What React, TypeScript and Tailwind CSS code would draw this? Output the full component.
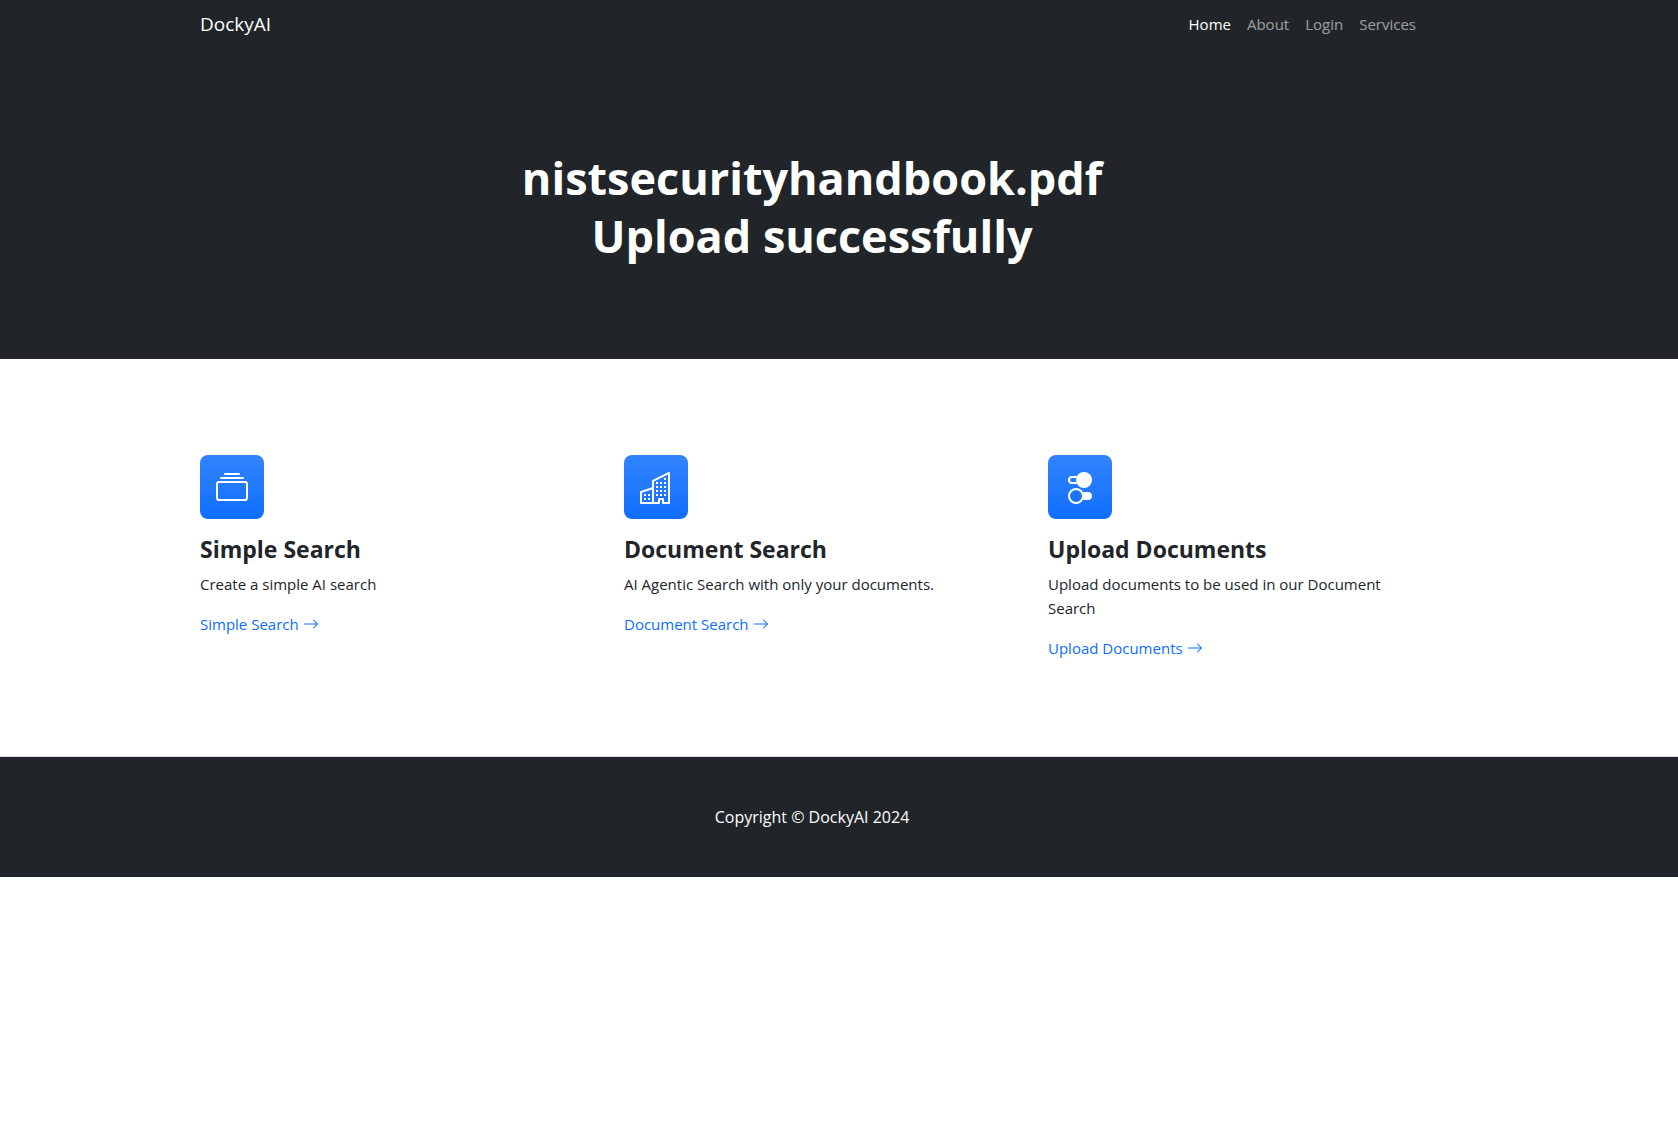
import type { IconType } from "react-icons";
import { BsArrowRight, BsBuildings, BsCollection, BsToggles2 } from "react-icons/bs";

const navLinks = ["Home", "About", "Login", "Services"];

const features: { title: string; text: string; Icon: IconType }[] = [
  { title: "Simple Search", text: "Create a simple AI search", Icon: BsCollection },
  { title: "Document Search", text: "AI Agentic Search with only your documents.", Icon: BsBuildings },
  { title: "Upload Documents", text: "Upload documents to be used in our Document Search", Icon: BsToggles2 },
];

const container = "mx-auto w-full max-w-[1320px] px-12";

export default function App() {
  return (
    <div className="min-h-screen bg-white font-['Open_Sans','Noto_Sans',sans-serif] text-[15px] leading-6 text-[#212529]">
      <nav className="bg-[#212529] py-1 pr-[54px]">
        <div className={`${container} flex items-center justify-between`}>
          <a href="#" className="py-1 text-[19px] leading-8 text-white">
            DockyAI
          </a>
          <ul className="flex">
            {navLinks.map((label) => (
              <li key={label}>
                <a
                  href="#"
                  className={label === "Home" ? "block p-2 text-white" : "block p-2 text-white/55"}
                >
                  {label}
                </a>
              </li>
            ))}
          </ul>
        </div>
      </nav>

      <header className="bg-[#212529] pt-[101px] pr-[54px] pb-[94px]">
        <div className={container}>
          <h1 className="mx-auto max-w-[636px] text-center text-[45px] leading-[58px] font-bold text-white">
            nistsecurityhandbook.pdf Upload successfully
          </h1>
        </div>
      </header>

      <section className="border-b border-[#dee2e6] py-24 pr-[54px]">
        <div className={`${container} grid gap-12 md:grid-cols-3`}>
          {features.map(({ title, text, Icon }) => (
            <div key={title}>
              <div className="mb-4 flex size-16 items-center justify-center rounded-lg bg-linear-to-b from-[#3184fd] to-[#0d6efd] pt-0.5 text-white">
                <Icon className="size-8" />
              </div>
              <h2 className="mb-2 text-[23px] leading-[29px] font-bold">{title}</h2>
              <p className="mb-4">{text}</p>
              <a href="#" className="flex items-center gap-1 text-[#0d6efd]">
                {title}
                <BsArrowRight className="size-4" />
              </a>
            </div>
          ))}
        </div>
      </section>

      <footer className="bg-[#212529] py-12 pr-[54px]">
        <p className="text-center text-base text-white">Copyright © DockyAI 2024</p>
      </footer>
    </div>
  );
}
